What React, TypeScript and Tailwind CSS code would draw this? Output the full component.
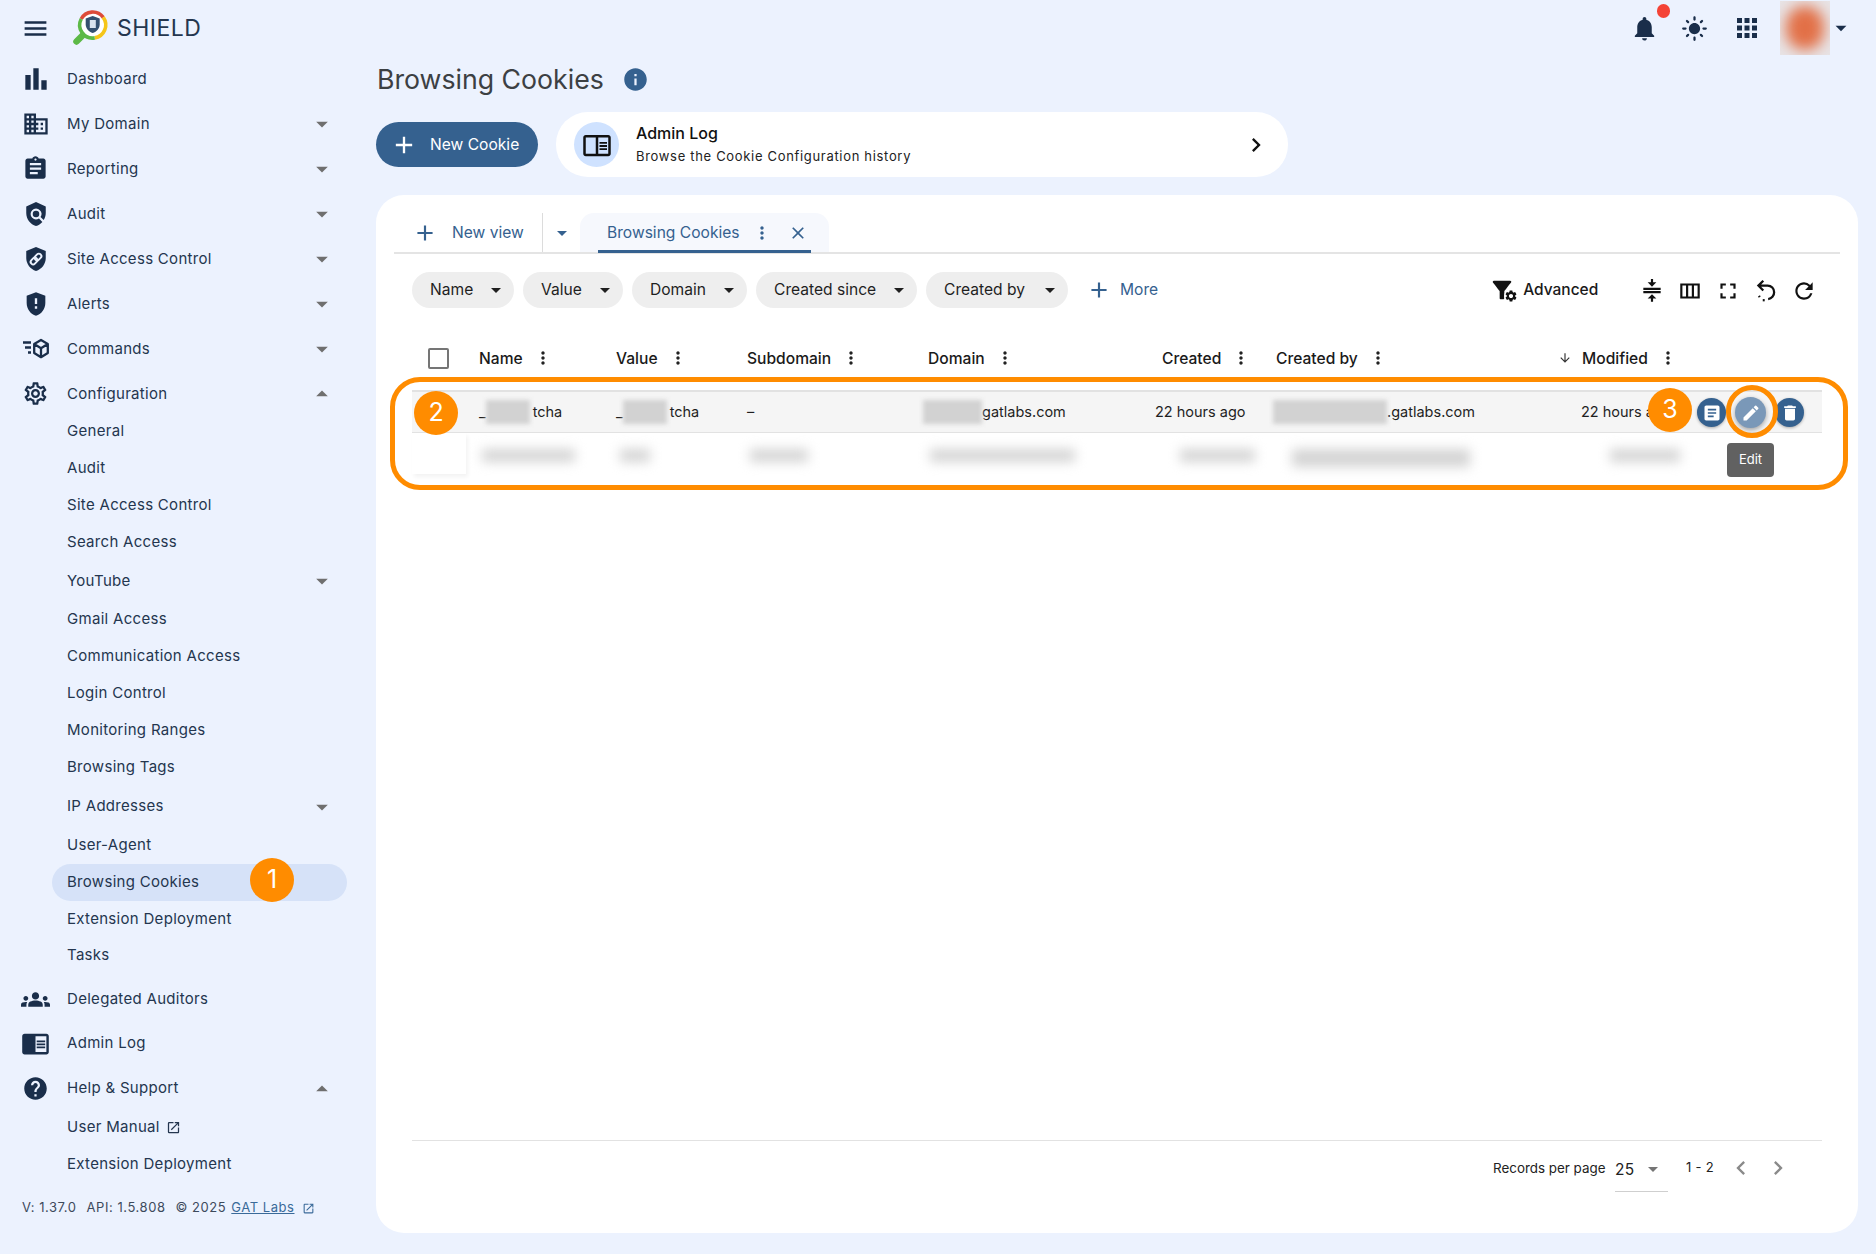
import React from "react";
import {
  MdMenu, MdBarChart, MdDomain, MdAssignment, MdPolicy, MdGppMaybe, MdOutlineSettings, MdGroups, MdChromeReaderMode, MdHelp,
  MdOpenInNew, MdNotifications, MdLightMode, MdApps, MdInfo, MdAdd, MdMoreVert, MdClose, MdArrowDropDown, MdArrowDropUp,
  MdFilterAlt, MdSettings, MdCompress, MdOutlineViewColumn, MdFullscreen, MdRefresh, MdArrowDownward, MdArticle, MdEdit, MdDelete,
  MdChevronLeft, MdChevronRight, MdOutlineChromeReaderMode,
} from "react-icons/md";

const Logo = () => (
  <svg width="40" height="40" viewBox="0 0 40 40" fill="none">
    <line x1="13" y1="27" x2="6.500" y2="33.500" stroke="#5cb947" strokeWidth="6.5" strokeLinecap="round" />
    <g transform="translate(0 -4)">
      <circle cx="22.7" cy="21" r="13" fill="#fff" />
      <path d="M11.2 15A13 13 0 0 1 33.2 13.4" stroke="#dd4b39" strokeWidth="3.6" />
      <path d="M33.2 13.4A13 13 0 0 1 24.7 33.9" stroke="#f5c518" strokeWidth="3.6" />
      <path d="M24.7 33.9A13 13 0 0 1 11.2 15" stroke="#5cb947" strokeWidth="3.6" />
      <path d="M22.7 12l-7 2.600v5.600c0 4.200 3 7.600 7 8.800 4-1.200 7-4.600 7-8.800v-5.600z" fill="#34506f" />
      <rect x="19.800" y="16" width="6" height="8" fill="#d9e3ee" />
    </g>
  </svg>
);

const ShieldLink = () => (
  <svg width="26" height="26" viewBox="0 0 24 24" fill="none">
    <path d="M12 1 3 4.500v6.600c0 5.500 3.800 10.600 9 11.900 5.200-1.300 9-6.400 9-11.900V4.500z" fill="#1a2e4a" />
    <g transform="rotate(45 12 12)" stroke="#ecf2fe" strokeWidth="1.8">
      <rect x="9.700" y="6" width="4.600" height="6.800" rx="2.300" />
      <rect x="9.700" y="11.200" width="4.600" height="6.800" rx="2.300" />
    </g>
  </svg>
);

const CommandsIcon = () => (
  <svg width="28" height="24" viewBox="0 0 28 24" fill="none">
    <g stroke="#1a2e4a" strokeWidth="2.300">
      <path d="M1 5.500h8M3 10.500h6M6 15.500h3" />
      <path d="M19 3l6.800 4v9L19 20.200 12.200 16V7zM12.200 7 19 11.200 25.800 7M19 11.200v9" strokeLinejoin="round" />
    </g>
  </svg>
);

const ResetIcon = () => (
  <svg width="26" height="26" viewBox="0 0 24 24" fill="none">
    <path d="M9.500 2.500 5 7l4.500 4.500M5 7h8.500a6 6 0 0 1 6 6.200 6.200 6.200 0 0 1-5.500 6.300" stroke="#111" strokeWidth="2.100" />
    <path d="M9 20.500h1.800" stroke="#111" strokeWidth="2.100" />
    <path d="M5.500 16.500l.7 1.200" stroke="#111" strokeWidth="2.100" />
  </svg>
);

type Item = { label: string; icon?: React.ReactNode; caret?: "down" | "up"; h: string; active?: boolean; ext?: boolean; };

const C = "#1a2e4a";
const items: Item[] = [
  { label: "Dashboard", icon: <MdBarChart size={32} color={C} />, h: "h-[45px]" },
  { label: "My Domain", icon: <MdDomain size={28} color={C} />, caret: "down", h: "h-[45px]" },
  { label: "Reporting", icon: <MdAssignment size={27} color={C} />, caret: "down", h: "h-[45px]" },
  { label: "Audit", icon: <MdPolicy size={26} color={C} />, caret: "down", h: "h-[45px]" },
  { label: "Site Access Control", icon: <ShieldLink />, caret: "down", h: "h-[45px]" },
  { label: "Alerts", icon: <MdGppMaybe size={28} color={C} />, caret: "down", h: "h-[45px]" },
  { label: "Commands", icon: <CommandsIcon />, caret: "down", h: "h-[45px]" },
  { label: "Configuration", icon: <MdOutlineSettings size={27} color={C} />, caret: "up", h: "h-[45px] mb-[-3px]" },
  { label: "General", h: "h-[37px]" },
  { label: "Audit", h: "h-[37px]" },
  { label: "Site Access Control", h: "h-[37px]" },
  { label: "Search Access", h: "h-[37px]" },
  { label: "YouTube", caret: "down", h: "h-[40px]" },
  { label: "Gmail Access", h: "h-[37px]" },
  { label: "Communication Access", h: "h-[37px]" },
  { label: "Login Control", h: "h-[37px]" },
  { label: "Monitoring Ranges", h: "h-[37px]" },
  { label: "Browsing Tags", h: "h-[37px]" },
  { label: "IP Addresses", caret: "down", h: "h-[41px]" },
  { label: "User-Agent", h: "h-[37px]" },
  { label: "Browsing Cookies", h: "h-[37px]", active: true },
  { label: "Extension Deployment", h: "h-[36px]" },
  { label: "Tasks", h: "h-[37px] mb-[3px]" },
  { label: "Delegated Auditors", icon: <MdGroups size={29} color={C} />, h: "h-[44px]" },
  { label: "Admin Log", icon: <MdChromeReaderMode size={29} color={C} />, h: "h-[45px]" },
  { label: "Help & Support", icon: <MdHelp size={27} color={C} />, caret: "up", h: "h-[45px] mb-[-2px]" },
  { label: "User Manual", h: "h-[37px]", ext: true },
  { label: "Extension Deployment", h: "h-[37px]" },
];

function Sidebar() {
  return (
    <aside className="w-[376px] shrink-0 flex flex-col">
      {items.map((it, i) => (
        <div key={i} className={`${it.h} relative flex items-center text-[15px] tracking-[0.3px] text-[#24364f] pr-[40px]`}>
          {it.active && <div className="absolute left-[52px] top-0 w-[295px] h-[37px] rounded-full bg-[#d6e2f8]" />}
          {it.icon ? (
            <span className="w-[67px] h-full pl-[4px] flex items-center justify-center shrink-0">{it.icon}</span>
          ) : <span className="w-[67px] shrink-0" />}
          <span className={`relative flex-1 flex items-center gap-[6px] ${i < 8 ? "pt-[2px]" : ""}`}>
            {it.label}
            {it.ext && <MdOpenInNew size={15} color="#24364f" />}
          </span>
          {it.caret === "down" && <MdArrowDropDown size={28} color="#6f6f6f" />}
          {it.caret === "up" && <MdArrowDropUp size={28} color="#6f6f6f" />}
        </div>
      ))}
      <div className="mt-[16px] pl-[22px] h-[18px] flex items-center text-[13px] tracking-[0.55px] text-[#3d4a5c] whitespace-nowrap">
        <span>V: 1.37.0</span>
        <span className="ml-[10px]">API: 1.5.808</span>
        <span className="ml-[10px]">© 2025</span>
        <span className="ml-[5px] underline text-[#3a6a99]">GAT Labs</span>
        <span className="ml-[7px]"><MdOpenInNew size={13} color="#3a6a99" /></span>
      </div>
    </aside>
  );
}

const Chip = ({ label, w }: { label: string; w: string }) => (
  <div className={`${w} h-[36px] rounded-full bg-[#eeeeee] flex items-center justify-between pl-[18px] pr-[6px] text-[15.6px] text-[#1f1f1f]`}>
    {label}
    <MdArrowDropDown size={24} color="#1f1f1f" />
  </div>
);

const Head = ({ label, dots = "ml-[10px]", cls = "" }: { label: string; dots?: string; cls?: string }) => (
  <div className={`flex items-center text-[15.6px] font-medium text-[#1a1a1a] ${cls}`}>
    {label}
    <span className={dots}><MdMoreVert size={20} color="#222" /></span>
  </div>
);

const Mask = ({ w }: { w: string }) => (
  <span className={`${w} h-[24px] inline-block bg-[#d2d2d2] blur-[2px]`} />
);

const Smear = ({ x, w, extra = "h-[13px]" }: { x: string; w: string; extra?: string }) => (
  <div className={`absolute ${x} ${w} top-[16px] ${extra} bg-[#d4d4d4] blur-[6px]`} />
);

const Act = ({ children, cls = "bg-[#35618f] w-[29px] h-[29px]" }: { children: React.ReactNode; cls?: string }) => (
  <span className={`${cls} rounded-full flex items-center justify-center shadow-[0_1px_3px_rgba(0,0,0,0.3)]`}>{children}</span>
);

const Badge = ({ n, pos }: { n: string; pos: string }) => (
  <div className={`absolute ${pos} w-[44px] h-[44px] rounded-full bg-[#ff8c00] text-white text-[25px] flex items-center justify-center`}>{n}</div>
);

const cols = "grid grid-cols-[67px_137px_131px_181px_227px_119px_291px_1fr]";

function Main() {
  return (
    <main className="flex-1 flex flex-col pr-[18px]">
      <div className="h-[46px] flex items-center gap-[18px]">
        <h1 className="text-[26.7px] font-normal leading-none text-[#3c4043] pl-[1px]">Browsing Cookies</h1>
        <MdInfo size={27} color="#35618f" />
      </div>
      <div className="mt-[10px] flex items-center gap-[18px] h-[65px]">
        <div className="w-[162px] h-[45px] rounded-[23px] bg-[#35618f] flex items-center pl-[14px] text-white text-[15.6px] gap-[12px]">
          <MdAdd size={28} color="#fff" />New Cookie
        </div>
        <div className="w-[732px] h-[65px] rounded-[32px] bg-white flex items-center pl-[18px] pr-[18px]">
          <span className="w-[45px] h-[45px] rounded-full bg-[#cfe2ff] flex items-center justify-center">
            <MdOutlineChromeReaderMode size={30} color="#111" />
          </span>
          <div className="ml-[17px] flex-1 flex flex-col gap-[5px]">
            <span className="text-[16px] font-medium leading-[18px] text-[#111]">Admin Log</span>
            <span className="text-[13px] tracking-[0.68px] leading-[18px] text-[#222]">Browse the Cookie Configuration history</span>
          </div>
          <MdChevronRight size={28} color="#111" />
        </div>
      </div>
      <section className="mt-[18px] h-[1038px] rounded-[28px] bg-white px-[18px] pt-[18px] flex flex-col">
        <div className="h-[41px] border-b-2 border-[#e4e4e4] flex items-stretch">
          <div className="w-[149px] flex items-center pl-[18px] gap-[14px] border-r border-[#dcdcdc] text-[15.6px] text-[#35618f]">
            <MdAdd size={26} color="#35618f" />New view
          </div>
          <div className="w-[37px] flex items-center justify-center"><MdArrowDropDown size={24} color="#35618f" /></div>
          <div className="w-[249px] bg-[#f6f8fd] rounded-t-[14px] px-[18px]">
            <div className="h-[40px] border-b-[3px] border-[#35618f] flex items-center pl-[9px] pt-[2px] text-[15.6px] text-[#35618f]">
              Browsing Cookies
              <span className="ml-[12px]"><MdMoreVert size={20} color="#35618f" /></span>
              <span className="ml-[16px]"><MdClose size={20} color="#35618f" /></span>
            </div>
          </div>
        </div>
        <div className="mt-[18px] px-[18px] flex items-center">
          <div className="flex items-center gap-[9px]">
            <Chip label="Name" w="w-[102px]" />
            <Chip label="Value" w="w-[100px]" />
            <Chip label="Domain" w="w-[115px]" />
            <Chip label="Created since" w="w-[161px]" />
            <Chip label="Created by" w="w-[142px]" />
          </div>
          <div className="ml-[18px] flex items-center gap-[8px] text-[15.6px] text-[#35618f]">
            <MdAdd size={26} color="#35618f" />More
          </div>
          <div className="ml-[332px] flex items-center w-[118px]">
            <span className="relative w-[28px] h-[26px] block">
              <MdFilterAlt size={28} color="#111" className="absolute -left-[2px] -top-[1px]" />
              <MdSettings size={14} color="#111" className="absolute right-0 bottom-0 bg-white rounded-full" />
            </span>
            <span className="ml-[5px] text-[15.5px] font-medium text-[#1a1a1a]">Advanced</span>
          </div>
          <div className="ml-[31px] flex items-center gap-[12px] pt-[2px]">
            <MdCompress size={26} color="#111" />
            <MdOutlineViewColumn size={26} color="#111" />
            <MdFullscreen size={26} color="#111" />
            <ResetIcon />
            <MdRefresh size={26} color="#111" />
          </div>
        </div>

        <div className="mt-[27px] px-[18px] relative flex-1 flex flex-col">
          <div className={`${cols} h-[55px] items-center pb-[8px]`}>
            <span className="ml-[16px] w-[21px] h-[21px] rounded-[2px] border-2 border-[#757575] block" />
            <Head label="Name" />
            <Head label="Value" />
            <Head label="Subdomain" />
            <Head label="Domain" />
            <Head label="Created" cls="pl-[7px]" />
            <Head label="Created by" cls="pl-[2px]" />
            <div className="flex items-center text-[15.6px] font-medium text-[#1a1a1a]">
              <MdArrowDownward size={14} color="#333" className="-ml-[7px] mr-[10px]" />
              Modified
              <span className="ml-[10px]"><MdMoreVert size={20} color="#222" /></span>
            </div>
          </div>
          <div className={`${cols} h-[43px] items-center bg-[#f5f5f5] border-t-2 border-b border-[#e2e2e2] text-[14.5px] text-[#1f1f1f]`}>
            <span />
            <span className="flex items-center">_<Mask w="w-[44px]" /><span className="ml-[3px]">tcha</span></span>
            <span className="flex items-center">_<Mask w="w-[44px]" /><span className="ml-[3px]">tcha</span></span>
            <span>–</span>
            <span className="flex items-center -ml-[5px]"><Mask w="w-[59px]" />gatlabs.com</span>
            <span>22 hours ago</span>
            <span className="flex items-center -ml-[1px]"><Mask w="w-[114px]" />.gatlabs.com</span>
            <span className="relative pl-[16px] whitespace-nowrap">
              22 hours ago
              <span className="absolute right-[18px] -top-[4px] flex items-center gap-[9px]">
                <Act><MdArticle size={20} color="#fff" /></Act>
                <Act cls="bg-[#7a98b8] w-[31px] h-[31px] shadow-[0_2px_5px_rgba(0,0,0,0.35)]"><MdEdit size={20} color="#fff" /></Act>
                <Act><MdDelete size={20} color="#fff" /></Act>
              </span>
            </span>
          </div>
          <div className="relative h-[43px]">
            <div className="absolute left-0 top-0 w-[54px] h-[41px] shadow-[2px_3px_4px_rgba(0,0,0,0.05)]" />
            <Smear x="left-[70px]" w="w-[93px]" />
            <Smear x="left-[208px]" w="w-[30px]" />
            <Smear x="left-[338px]" w="w-[58px]" />
            <Smear x="left-[518px]" w="w-[145px]" />
            <Smear x="left-[768px]" w="w-[75px]" />
            <Smear x="left-[880px]" w="w-[178px]" extra="h-[18px]" />
            <Smear x="left-[1198px]" w="w-[70px]" />
          </div>
          <div className="mt-auto border-t border-[#e2e2e2] h-[93px] flex items-start pt-[15px] pl-[1081px] text-[#222]">
            <div className="text-[13.4px] h-[24px] flex items-center w-[122px]">Records per page</div>
            <div className="w-[53px] h-[36px] border-b border-[#cfcfcf] flex items-start justify-between text-[15.5px] pt-[2px] tracking-[0.3px]">
              25<MdArrowDropDown size={24} color="#757575" className="-mt-[1px] mr-[3px]" />
            </div>
            <div className="ml-[18px] text-[13px] h-[24px] flex items-center w-[41px] tracking-[0.3px]">1 - 2</div>
            <div className="flex items-center gap-[9px] h-[24px]">
              <MdChevronLeft size={28} color="#8a8a8a" />
              <MdChevronRight size={28} color="#8a8a8a" />
            </div>
          </div>
        </div>
      </section>
    </main>
  );
}

export default function App() {
  return (
    <div className="relative w-[1876px] h-[1254px] overflow-hidden bg-[#ecf2fe] font-['Inter',sans-serif]">
      <header className="h-[56px] flex items-center">
        <span className="ml-[21px]"><MdMenu size={29} color={C} /></span>
        <span className="ml-[20px]"><Logo /></span>
        <span className="ml-[7px] text-[23px] tracking-[0.5px] text-[#24364f]">SHIELD</span>
        <div className="ml-auto flex items-center">
          <span className="relative">
            <MdNotifications size={29} color={C} />
            <span className="absolute left-[27px] -top-[10px] w-[13px] h-[14px] rounded-full bg-[#f44336]" />
          </span>
          <span className="ml-[22px]"><MdLightMode size={27} color={C} /></span>
          <span className="ml-[24px]"><MdApps size={30} color={C} /></span>
          <span className="ml-[18px] w-[50px] h-[54px] bg-[#e8e4e6] overflow-hidden flex items-center justify-center">
            <span className="w-[38px] h-[44px] rounded-full bg-[#e27047] blur-[7px] block" />
          </span>
          <span className="-ml-[2px] mr-[22px]"><MdArrowDropDown size={26} color={C} /></span>
        </div>
      </header>
      <div className="flex">
        <Sidebar />
        <Main />
      </div>

      <Badge n="1" pos="left-[250px] top-[858px]" />
      <div className="absolute left-[390px] top-[377px] w-[1458px] h-[113px] rounded-[30px] border-[5px] border-[#ff8c00]" />
      <Badge n="2" pos="left-[414px] top-[391px]" />
      <Badge n="3" pos="left-[1648px] top-[388px]" />
      <div className="absolute left-[1726px] top-[385px] w-[52px] h-[53px] rounded-full border-[5px] border-[#ff8c00]" />
      <div className="absolute left-[1727px] top-[443px] w-[47px] h-[34px] rounded-[4px] bg-[#616161] text-white text-[13px] flex items-center justify-center">Edit</div>
    </div>
  );
}
